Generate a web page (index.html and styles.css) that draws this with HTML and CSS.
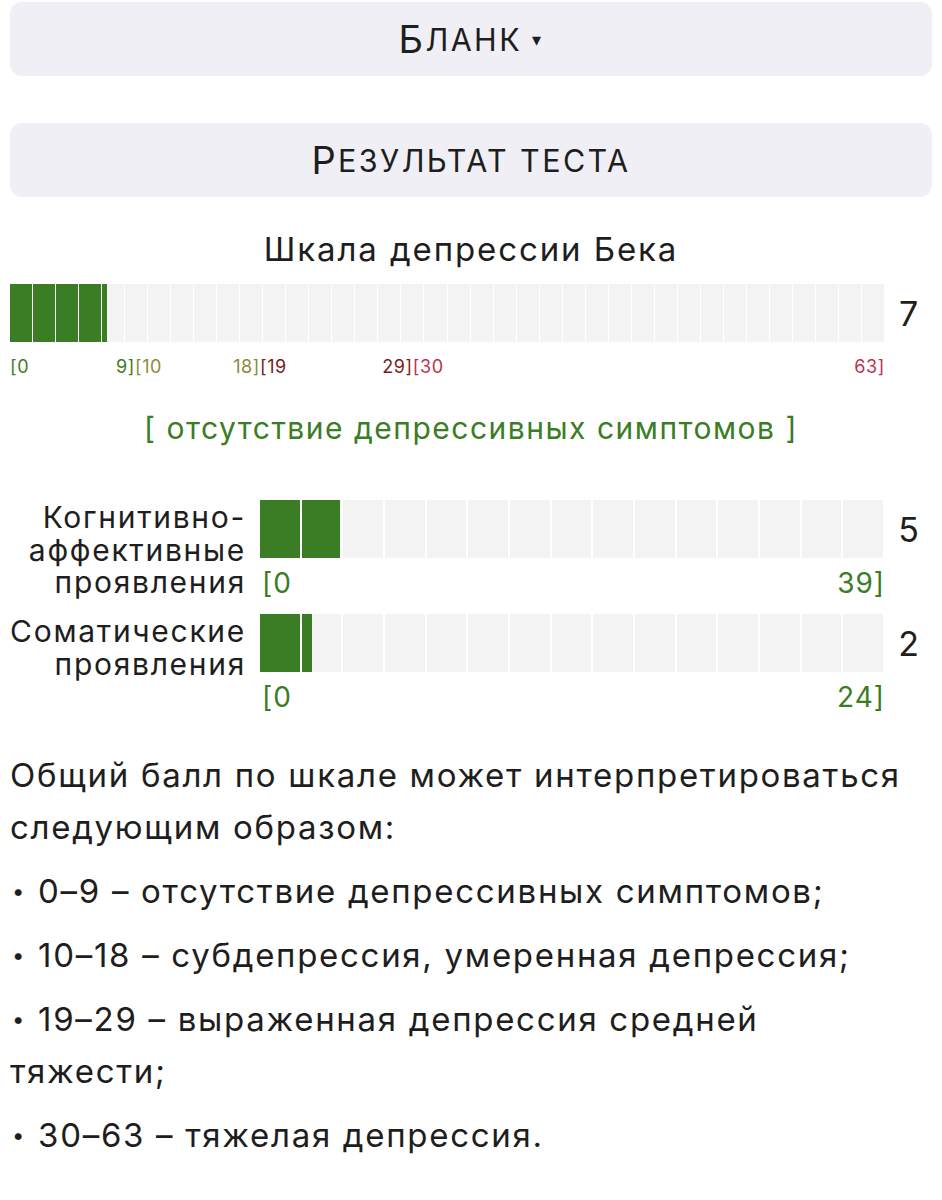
FILE: index.html
```html
<!DOCTYPE html>
<html lang="ru">
<head>
<meta charset="utf-8">
<title>Результат теста</title>
<link rel="stylesheet" href="styles.css">
</head>
<body>
<div class="page">
  <div class="btn btn-first"><span class="cap">Б</span><span class="sc">ланк</span><span class="caret">▾</span></div>
  <div class="btn btn-second"><span class="cap">Р</span><span class="sc">езультат теста</span></div>

  <div class="scale-title">Шкала депрессии Бека</div>
  <div class="main-row">
    <div class="bar bar-main" style="--fill: 11.111%"></div>
    <div class="value">7</div>
  </div>
  <div class="ranges">
    <div class="range" style="flex-grow: 9"><span class="c1">[0</span><span class="c1">9]</span></div>
    <div class="range" style="flex-grow: 9"><span class="c2">[10</span><span class="c2">18]</span></div>
    <div class="range" style="flex-grow: 11"><span class="c3">[19</span><span class="c3">29]</span></div>
    <div class="range" style="flex-grow: 34"><span class="c4">[30</span><span class="c4">63]</span></div>
  </div>
  <div class="status">[ отсутствие депрессивных симптомов ]</div>

  <div class="sub sub-first">
    <div class="sub-label">Когнитивно-<br>аффективные<br>проявления</div>
    <div class="bar bar-sub" style="--fill: 12.82%"></div>
    <div class="value">5</div>
    <div class="sub-scale"><span>[0</span><span>39]</span></div>
  </div>
  <div class="sub">
    <div class="sub-label">Соматические<br>проявления</div>
    <div class="bar bar-sub" style="--fill: 8.333%"></div>
    <div class="value">2</div>
    <div class="sub-scale"><span>[0</span><span>24]</span></div>
  </div>

  <div class="text">
    <p>Общий балл по шкале может интерпретироваться следующим образом:</p>
    <p class="item">0–9 – отсутствие депрессивных симптомов;</p>
    <p class="item">10–18 – субдепрессия, умеренная депрессия;</p>
    <p class="item">19–29 – выраженная депрессия средней тяжести;</p>
    <p class="item">30–63 – тяжелая депрессия.</p>
  </div>
</div>
</body>
</html>
```
FILE: styles.css
```css
html, body {
  margin: 0;
  padding: 0;
  background: #ffffff;
}
body {
  font-family: Inter, "Noto Sans", "Liberation Sans", sans-serif;
  color: #1e1e20;
}
.page {
  padding: 2px 10px 0 10px;
}
.btn {
  background: #efeff5;
  border-radius: 12px;
  height: 74px;
  display: flex;
  align-items: center;
  justify-content: center;
  color: #1e1e20;
  letter-spacing: 2.4px;
}
.btn-second {
  margin-top: 47px;
}
.cap {
  font-size: 38px;
}
.sc {
  font-size: 30.5px;
  text-transform: uppercase;
}
.caret {
  font-size: 18px;
  margin-left: 10px;
  vertical-align: 4px;
}
.scale-title {
  text-align: center;
  font-size: 33px;
  letter-spacing: 1.9px;
  line-height: 40px;
  margin-top: 32px;
}
.main-row {
  display: flex;
  align-items: center;
  margin-top: 15px;
}
.bar {
  flex: 1;
  height: 58px;
}
.bar-main {
  background:
    repeating-linear-gradient(90deg, transparent 0, transparent calc(100% / 38 - 1px), #ffffff calc(100% / 38 - 1px), #ffffff calc(100% / 38)),
    linear-gradient(90deg, #3a7d25 var(--fill), #f3f3f3 var(--fill));
}
.bar-sub {
  background:
    repeating-linear-gradient(90deg, transparent 0, transparent calc(100% / 15 - 2px), #ffffff calc(100% / 15 - 2px), #ffffff calc(100% / 15)),
    linear-gradient(90deg, #3a7d25 var(--fill), #f3f3f3 var(--fill));
}
.value {
  width: 47px;
  text-align: center;
  font-size: 34px;
  color: #1e1e20;
}
.ranges {
  display: flex;
  margin-right: 47px;
  margin-top: 12px;
  font-size: 18px;
  letter-spacing: 0.6px;
  line-height: 26px;
}
.range {
  display: flex;
  justify-content: space-between;
  flex-basis: 0;
}
.c1 { color: #3f7a2a; }
.c2 { color: #8c8a3c; }
.c3 { color: #7a1c1c; }
.c4 { color: #b8344f; }
.status {
  text-align: center;
  color: #3a7d25;
  font-size: 30px;
  letter-spacing: 1.5px;
  line-height: 40px;
  margin-top: 28px;
}
.sub {
  display: grid;
  grid-template-columns: 250px 1fr 47px;
  grid-template-rows: 58px auto;
  margin-top: 15px;
}
.sub-first {
  margin-top: 52px;
}
.sub-label {
  grid-row: 1 / span 2;
  text-align: right;
  font-size: 30px;
  letter-spacing: 1.7px;
  line-height: 32.5px;
  margin-top: 1px;
  padding-right: 14px;
}
.sub .bar {
  grid-column: 2;
  grid-row: 1;
}
.sub .value {
  grid-column: 3;
  grid-row: 1;
  align-self: center;
}
.sub-scale {
  grid-column: 2;
  grid-row: 2;
  display: flex;
  justify-content: space-between;
  color: #3a7d25;
  font-size: 28px;
  letter-spacing: 1px;
  line-height: 32px;
  margin-top: 9px;
  padding: 0 0 0 2px;
}
.text {
  margin-top: 36px;
  font-size: 33px;
  letter-spacing: 1.7px;
  line-height: 52px;
  max-width: 900px;
}
.text p {
  margin: 0 0 12px 0;
}
.item::before {
  content: "•";
  font-size: 22px;
  line-height: 1;
  vertical-align: 4px;
  margin-left: 2px;
  margin-right: 12px;
}
```
